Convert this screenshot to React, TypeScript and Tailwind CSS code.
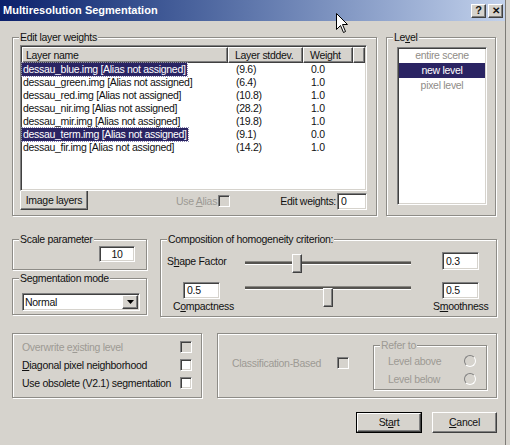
import React from "react"

// classic win32 bevels
const raised =
  "border border-white border-b-[#404040] border-r-[#404040] shadow-[inset_-1px_-1px_0_#808080] bg-[#d6d3cd]"
const sunken =
  "border border-[#808080] border-b-white border-r-white shadow-[inset_1px_1px_0_#404040,inset_-1px_-1px_0_#d6d3cd]"

const layers = [
  { name: "dessau_blue.img [Alias not assigned]", dev: "(9.6)", weight: "0.0", selected: true },
  { name: "dessau_green.img [Alias not assigned]", dev: "(6.4)", weight: "1.0" },
  { name: "dessau_red.img [Alias not assigned]", dev: "(10.8)", weight: "1.0" },
  { name: "dessau_nir.img [Alias not assigned]", dev: "(28.2)", weight: "1.0" },
  { name: "dessau_mir.img [Alias not assigned]", dev: "(19.8)", weight: "1.0" },
  { name: "dessau_term.img [Alias not assigned]", dev: "(9.1)", weight: "0.0", selected: true },
  { name: "dessau_fir.img [Alias not assigned]", dev: "(14.2)", weight: "1.0" },
]

function Group({
  label,
  className,
  disabled,
  children,
}: {
  label?: React.ReactNode
  className?: string
  disabled?: boolean
  children?: React.ReactNode
}) {
  return (
    <div
      className={`relative border border-[#8e8c87] shadow-[inset_1px_1px_0_#fff,1px_1px_0_#fff] ${className ?? ""}`}
    >
      {label && (
        <span
          className={`absolute -top-[7px] left-[6px] px-[1px] bg-[#d6d3cd] leading-[13px] whitespace-nowrap ${
            disabled ? "text-[#9d9a94]" : ""
          }`}
        >
          {label}
        </span>
      )}
      {children}
    </div>
  )
}

function Check({ disabled }: { disabled?: boolean }) {
  return (
    <div className={`w-[12px] h-[12px] shrink-0 ${sunken} ${disabled ? "bg-[#d6d3cd]" : "bg-white"}`} />
  )
}

function Radio() {
  return (
    <div className="w-[12px] h-[12px] rounded-full border border-[#808080] border-b-white border-r-white bg-[#d6d3cd]" />
  )
}

function Field({ value, className }: { value: string; className?: string }) {
  return (
    <div className={`bg-white pl-[3px] flex items-center ${sunken} ${className ?? ""}`}>{value}</div>
  )
}

function Slider({ pos }: { pos: number }) {
  return (
    <div className="relative w-[166px] h-[18px]">
      <div className="mt-[9px] h-[4px] bg-[#55534f] border-t border-b border-[#8a8883] border-b-white" />
      <div className={`absolute top-[2px] w-[10px] h-[19px] ${raised}`} style={{ left: pos }} />
    </div>
  )
}

export default function App() {
  return (
    <div className="relative w-[510px] h-[445px] bg-[#d6d3cd] overflow-hidden font-['Liberation_Sans',Arial,sans-serif] text-[10.5px] tracking-[-0.3px] leading-[13px] text-[#111] whitespace-nowrap">
      <div className="w-[506px] h-full border-r border-[#7d7b76]">
        {/* title bar */}
        <div className="h-[21px] w-[505px] bg-linear-to-r from-[#0c1f6b] to-[#c3d2ec] flex items-center pl-[3px]">
          <span className="font-bold text-white text-[11px] tracking-normal">Multiresolution Segmentation</span>
          <div className="ml-auto mr-[2px] flex gap-[2px]">
            <div className={`w-[15px] h-[14px] flex items-center justify-center font-bold text-[11px] ${raised}`}>?</div>
            <div className={`w-[15px] h-[14px] flex items-center justify-center font-bold text-[10px] ${raised}`}>✕</div>
          </div>
        </div>

        <div className="pl-[12px]">
          {/* row 1 */}
          <div className="mt-[16px] flex gap-[9px]">
            <Group label="Edit layer weights" className="w-[365px] h-[179px]">
              <div className={`mt-[7px] ml-[7px] w-[347px] h-[146px] bg-white ${sunken}`}>
                <div className="mt-[1px] ml-[1px] flex h-[16px]">
                  <div className={`w-[206px] pl-[3px] leading-[14px] ${raised}`}>Layer name</div>
                  <div className={`w-[75px] pl-[6px] leading-[14px] ${raised}`}>Layer stddev.</div>
                  <div className={`w-[50px] pl-[6px] leading-[14px] ${raised}`}>Weight</div>
                  <div className={`w-[12px] ${raised}`} />
                </div>
                {layers.map((l) => (
                  <div key={l.name} className="flex h-[13px] ml-[1px]">
                    <div className="w-[206px]">
                      <span
                        className={`inline-block px-[1px] ${
                          l.selected ? "bg-[#2a2463] text-white outline-1 outline-dotted outline-[#8c88b0]" : ""
                        }`}
                      >
                        {l.name}
                      </span>
                    </div>
                    <div className="w-[75px] pl-[8px]">{l.dev}</div>
                    <div className="w-[50px] pl-[8px]">{l.weight}</div>
                  </div>
                ))}
              </div>
              <div className="ml-[7px] w-[347px] h-[20px] flex items-center">
                <div className="self-start w-[68px] h-[19px] flex items-center justify-center border-l border-white border-r border-r-[#404040] border-b border-b-[#404040] shadow-[inset_-1px_-1px_0_#808080]">
                  Image layers
                </div>
                <span className="ml-[88px] text-[#9d9a94]">
                  Use <u>A</u>lias
                </span>
                <div className="ml-[1px]">
                  <Check disabled />
                </div>
                <div className="ml-auto flex items-center gap-[1px]">
                  <span>Edit weights:</span>
                  <Field value="0" className="w-[30px] h-[17px]" />
                </div>
              </div>
            </Group>

            <Group
              label={
                <>
                  Le<u>v</u>el
                </>
              }
              className="w-[110px] h-[179px]"
            >
              <div className={`mt-[9px] ml-[10px] w-[90px] h-[158px] bg-white ${sunken}`}>
                <div className="h-[15px] mx-[1px] flex items-center justify-center text-[#8f8c87]">entire scene</div>
                <div className="h-[15px] mx-[1px] flex items-center justify-center bg-[#2a2463] text-white">
                  new level
                </div>
                <div className="h-[15px] mx-[1px] flex items-center justify-center text-[#8f8c87]">pixel level</div>
              </div>
            </Group>
          </div>

          {/* row 2 */}
          <div className="mt-[23px] flex">
            <div className="w-[135px]">
              <Group label="Scale parameter" className="h-[31px]">
                <div className={`mt-[6px] ml-[86px] w-[36px] h-[16px] bg-white flex items-center justify-center ${sunken}`}>
                  10
                </div>
              </Group>
              <Group label="Segmentation mode" className="mt-[8px] h-[37px]">
                <div className={`mt-[14px] ml-[9px] w-[118px] h-[18px] bg-white flex items-center ${sunken}`}>
                  <span className="pl-[2px]">Normal</span>
                  <div className={`ml-auto mr-[1px] w-[16px] h-[14px] flex items-center justify-center ${raised}`}>
                    <svg width="7" height="4" viewBox="0 0 7 4">
                      <path d="M0 0h7L3.5 4z" fill="#000" />
                    </svg>
                  </div>
                </div>
              </Group>
            </div>

            <Group label="Composition of homogeneity criterion:" className="ml-[13px] w-[337px] h-[78px]">
              <div className="mt-[12px] pl-[6px] flex items-center h-[18px]">
                <span className="w-[78px]">
                  S<u>h</u>ape Factor
                </span>
                <Slider pos={47} />
                <Field value="0.3" className="ml-[31px] w-[37px] h-[18px]" />
              </div>
              <div className="mt-[11px] pl-[6px] flex items-center h-[18px]">
                <Field value="0.5" className="ml-[16px] w-[37px] h-[17px]" />
                <div className="ml-[25px]">
                  <Slider pos={78} />
                </div>
                <Field value="0.5" className="ml-[31px] w-[37px] h-[17px]" />
              </div>
              <div className="pl-[12px] flex h-[14px] items-center">
                <span className="w-[260px]">
                  C<u>o</u>mpactness
                </span>
                <span>
                  S<u>m</u>oothness
                </span>
              </div>
            </Group>
          </div>

          {/* row 3 */}
          <div className="mt-[16px] flex">
            <Group className="w-[190px] h-[65px] pt-[4px]">
              {[
                { t: <>Overwrite e<u>x</u>isting level</>, d: true },
                { t: <><u>D</u>iagonal pixel neighborhood</> },
                { t: <>Use obsolete (V2.1) segmentation</> },
              ].map((r, i) => (
                <div key={i} className="flex items-center h-[18px] pl-[9px]">
                  <span className={`w-[158px] ${r.d ? "text-[#9d9a94]" : ""}`}>{r.t}</span>
                  <Check disabled={r.d} />
                </div>
              ))}
            </Group>

            <Group className="ml-[15px] w-[280px] h-[65px] flex items-start">
              <div className="mt-[22px] pl-[14px] flex items-center h-[14px]">
                <span className="w-[105px] text-[#9d9a94]">Classification-Based</span>
                <Check disabled />
              </div>
              <Group label="Refer to" disabled className="ml-[24px] mt-[11px] w-[114px] h-[45px] pt-[6px]">
                <div className="flex items-center h-[18px] pl-[14px]">
                  <span className="w-[76px] text-[#9d9a94]">Level above</span>
                  <Radio />
                </div>
                <div className="flex items-center h-[18px] pl-[14px]">
                  <span className="w-[76px] text-[#9d9a94]">Level below</span>
                  <Radio />
                </div>
              </Group>
            </Group>
          </div>

          {/* buttons */}
          <div className="mt-[14px] w-[485px] flex justify-end gap-[10px]">
            <div className="w-[66px] h-[21px] border border-black">
              <div className={`w-full h-full flex items-center justify-center ${raised}`}>
                St<u>a</u>rt
              </div>
            </div>
            <div className={`w-[65px] h-[21px] flex items-center justify-center ${raised}`}>
              <u>C</u>ancel
            </div>
          </div>
        </div>
      </div>

      {/* mouse pointer over the title bar */}
      <svg className="absolute left-[336px] top-[13px]" width="13" height="21" viewBox="0 0 13 21">
        <path d="M0.5 0.5V16.5L4.5 12.5L7.5 19.5L9.5 18.5L6.5 11.5H11.5Z" fill="#fff" stroke="#000" strokeWidth="1" />
      </svg>
    </div>
  )
}
